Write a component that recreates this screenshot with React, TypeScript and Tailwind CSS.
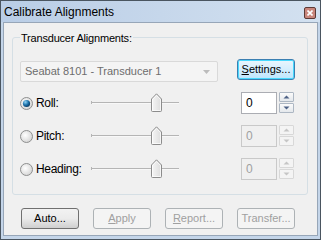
const font = "font-['Liberation_Sans',Arial,sans-serif]";

function Radio({ checked }: { checked?: boolean }) {
  return (
    <svg width="13" height="13" viewBox="0 0 13 13" className="shrink-0">
      <defs>
        <radialGradient id="rb" cx="0.4" cy="0.4" r="0.6">
          <stop offset="0" stopColor="#ffffff" />
          <stop offset="1" stopColor="#d7d7d7" />
        </radialGradient>
        <radialGradient id="rd" cx="0.35" cy="0.3" r="0.7">
          <stop offset="0" stopColor="#8fd3f5" />
          <stop offset="0.6" stopColor="#1a6fa8" />
          <stop offset="1" stopColor="#0d3f68" />
        </radialGradient>
      </defs>
      <circle cx="6.5" cy="6.5" r="6" fill="url(#rb)" stroke="#8e8f8f" />
      {checked && <circle cx="6.5" cy="6.5" r="3.6" fill="url(#rd)" />}
    </svg>
  );
}

function Slider() {
  return (
    <div className="relative h-[20px] w-[88px] shrink-0">
      <div className="absolute left-0 right-0 top-[9px] h-[1px] bg-[#b5b5b5]" />
      <div className="absolute left-0 right-0 top-[10px] h-[1px] bg-[#f8f8f8]" />
      <div className="absolute left-0 top-[8px] h-[3px] w-[1px] bg-[#b5b5b5]" />
      <svg width="11" height="19" viewBox="0 0 11 19" className="absolute left-[60px] top-0">
        <defs>
          <linearGradient id="th" x1="0" y1="0" x2="1" y2="0">
            <stop offset="0" stopColor="#f6f6f6" />
            <stop offset="1" stopColor="#dcdcdc" />
          </linearGradient>
        </defs>
        <path
          d="M1.5 18.5 H9.5 Q10.5 18.5 10.5 17.5 V6 L5.5 0.8 L0.5 6 V17.5 Q0.5 18.5 1.5 18.5 Z"
          fill="url(#th)"
          stroke="#8c8c8c"
        />
        <path d="M1.5 6.5 L5.5 2.4 L9.5 6.5 V17.5 H1.5 Z" fill="none" stroke="#ffffff" strokeOpacity="0.7" />
      </svg>
    </div>
  );
}

function Spin({ disabled }: { disabled?: boolean }) {
  const arrow = disabled ? "#c5c5c5" : "#4d6185";
  return (
    <div className="flex shrink-0 items-stretch gap-[2px]">
      <div
        className={`flex h-[22px] w-[36px] items-center border pl-[4px] text-[12px] ${
          disabled ? "border-[#c9c9c9] bg-[#f0f0f0] text-[#a0a0a0]" : "border-[#abadb3] bg-white text-black"
        }`}
      >
        0
      </div>
      <div className="flex w-[15px] flex-col gap-[1px]">
        {[0, 1].map((i) => (
          <div
            key={i}
            className={`flex h-[10px] items-center justify-center rounded-[1px] border ${
              disabled ? "border-[#d8d8d8] bg-[#f4f4f4]" : "border-[#adb7c3] bg-gradient-to-b from-[#fbfbfb] to-[#e4e8ec]"
            }`}
          >
            <svg width="7" height="4" viewBox="0 0 7 4">
              <path d={i === 0 ? "M0.5 3.5 L3.5 0.5 L6.5 3.5 Z" : "M0.5 0.5 L3.5 3.5 L6.5 0.5 Z"} fill={arrow} />
            </svg>
          </div>
        ))}
      </div>
    </div>
  );
}

function Row({ label, checked, disabled }: { label: string; checked?: boolean; disabled?: boolean }) {
  return (
    <div className="flex h-[22px] items-center">
      <div className="flex w-[71px] items-center gap-[3px]">
        <Radio checked={checked} />
        <span className="text-[12px] tracking-[-0.3px] text-black">{label}</span>
      </div>
      <Slider />
      <div className="ml-[62px]">
        <Spin disabled={disabled} />
      </div>
    </div>
  );
}

function Btn({ children, disabled, focus }: { children: React.ReactNode; disabled?: boolean; focus?: boolean }) {
  return (
    <div
      className={`flex h-[21px] w-[58px] items-center justify-center rounded-[3px] border text-[11px] ${
        disabled
          ? "border-[#adb2b5] bg-[#f4f4f4] text-[#a0a0a0]"
          : focus
            ? "border-[#3c7fb1] bg-gradient-to-b from-[#eaf6fd] to-[#bee6fd] text-black shadow-[inset_0_0_0_1px_#48d8fd]"
            : "border-[#707070] bg-gradient-to-b from-[#f2f2f2] via-[#ebebeb] to-[#cfcfcf] text-black"
      }`}
    >
      {children}
    </div>
  );
}

export default function App() {
  return (
    <div className={`${font} h-[240px] w-[321px] overflow-hidden border border-[#4a5560] bg-[#c4d5e9]`}>
      <div className="flex h-[21px] items-center justify-between bg-gradient-to-r from-[#b9cde6] to-[#d3e1f0] pl-[3px] pr-[4px]">
        <span className="text-[12px] text-black">Calibrate Alignments</span>
        <div className="mt-[2px] flex h-[12px] w-[12px] items-center justify-center rounded-[2px] border border-[#5c3a36] bg-[#c9867c]">
          <svg width="6" height="6" viewBox="0 0 6 6">
            <path d="M0.5 0.5 L5.5 5.5 M5.5 0.5 L0.5 5.5" stroke="#ffffff" strokeWidth="1.6" />
          </svg>
        </div>
      </div>
      <div className="mx-[2px] h-[214px] border border-[#97a6b8] bg-[#f0f0f0] pl-[8px] pt-[14px]">
        <div className="relative h-[158px] w-[296px] rounded-[3px] border border-[#d5dfe5] pl-[7px] pt-[21px]">
          <span className="absolute left-[7px] top-[-8px] bg-[#f0f0f0] px-[1px] text-[11px] tracking-[-0.2px] text-black">
            Transducer Alignments:
          </span>
          <div className="flex items-start">
            <div className="mt-[2px] flex h-[21px] w-[198px] items-center justify-between rounded-[2px] border border-[#d9d9d9] bg-[#f4f4f4] pl-[4px] pr-[7px]">
              <span className="text-[11px] text-[#6d6d6d]">Seabat 8101 - Transducer 1</span>
              <svg width="7" height="4" viewBox="0 0 7 4">
                <path d="M0 0 L7 0 L3.5 4 Z" fill="#bcbcbc" />
              </svg>
            </div>
            <div className="ml-[19px]">
              <Btn focus>
                <span>
                  <u>S</u>ettings...
                </span>
              </Btn>
            </div>
          </div>
          <div className="mt-[10px] flex flex-col gap-[11px]">
            <Row label="Roll:" checked />
            <Row label="Pitch:" disabled />
            <Row label="Heading:" disabled />
          </div>
        </div>
        <div className="mt-[13px] flex gap-[14px] pl-[9px]">
          <Btn>Auto...</Btn>
          <Btn disabled>
            <span>
              <u>A</u>pply
            </span>
          </Btn>
          <Btn disabled>
            <span>
              <u>R</u>eport...
            </span>
          </Btn>
          <Btn disabled>Transfer...</Btn>
        </div>
      </div>
    </div>
  );
}
